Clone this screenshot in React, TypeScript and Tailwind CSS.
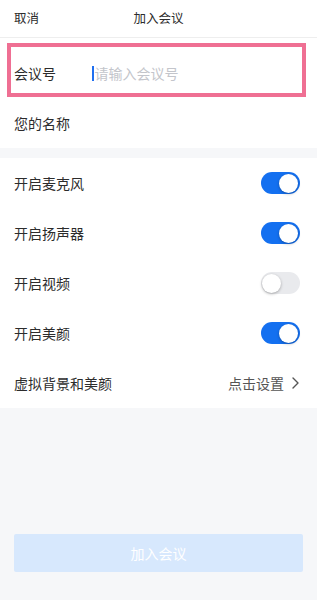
import React from "react";

function Toggle({ on }: { on: boolean }) {
  return (
    <div
      className={
        on
          ? "w-[39px] h-[22px] rounded-full bg-[#1470f0] flex items-center justify-end px-[2px]"
          : "w-[39px] h-[22px] rounded-full bg-[#e9eaed] flex items-center justify-start px-[1px]"
      }
    >
      <div className="w-[19px] h-[19px] rounded-full bg-white shadow-[0_1px_3px_rgba(0,0,0,0.3)]" />
    </div>
  );
}

const toggles: { label: string; on: boolean }[] = [
  { label: "开启麦克风", on: true },
  { label: "开启扬声器", on: true },
  { label: "开启视频", on: false },
  { label: "开启美颜", on: true },
];

export default function App() {
  return (
    <div
      className="w-[317px] h-[600px] bg-[#f6f7f9] flex flex-col text-[#2c2c2c]"
      style={{ fontFamily: '"Noto Sans CJK SC", "Noto Sans", sans-serif' }}
    >
      <div className="h-[38px] bg-white border-b border-[#eeeeee] relative flex items-center px-[14px] text-[12.5px]">
        <span>取消</span>
        <span className="absolute left-0 right-0 text-center pointer-events-none">加入会议</span>
      </div>
      <div className="bg-white pt-[10px] relative">
        <div className="h-[50px] flex items-center px-[14px] text-[14px]">
          <span className="w-[78px]">会议号</span>
          <span className="w-[1.5px] h-[15px] bg-[#1f6ff0] mr-[1px]" />
          <span className="text-[#c3c5cb]">请输入会议号</span>
        </div>
        <div className="h-[50px] flex items-center px-[14px] text-[14px]">
          <span>您的名称</span>
        </div>
        <div className="absolute left-[7px] top-[5px] w-[299px] h-[54px] border-[4px] border-[#ef6f93] pointer-events-none" />
      </div>
      <div className="h-[10px]" />
      <div className="bg-white">
        {toggles.map((t) => (
          <div key={t.label} className="h-[50px] flex items-center justify-between pl-[14px] pr-[17px] text-[14px]">
            <span>{t.label}</span>
            <Toggle on={t.on} />
          </div>
        ))}
        <div className="h-[50px] flex items-center justify-between pl-[14px] pr-[18px] text-[14px]">
          <span>虚拟背景和美颜</span>
          <span className="flex items-center gap-[8px] text-[#555]">
            点击设置
            <svg width="7" height="12" viewBox="0 0 7 12" fill="none">
              <path d="M1 1l5 5-5 5" stroke="#555" strokeWidth="1.4" strokeLinecap="round" strokeLinejoin="round" />
            </svg>
          </span>
        </div>
      </div>
      <div className="flex-1" />
      <div className="px-[14px] pb-[28px]">
        <div className="h-[38px] w-[289px] rounded-[2px] bg-[#d7e8fd] flex items-center justify-center text-white text-[14px]">
          加入会议
        </div>
      </div>
    </div>
  );
}
